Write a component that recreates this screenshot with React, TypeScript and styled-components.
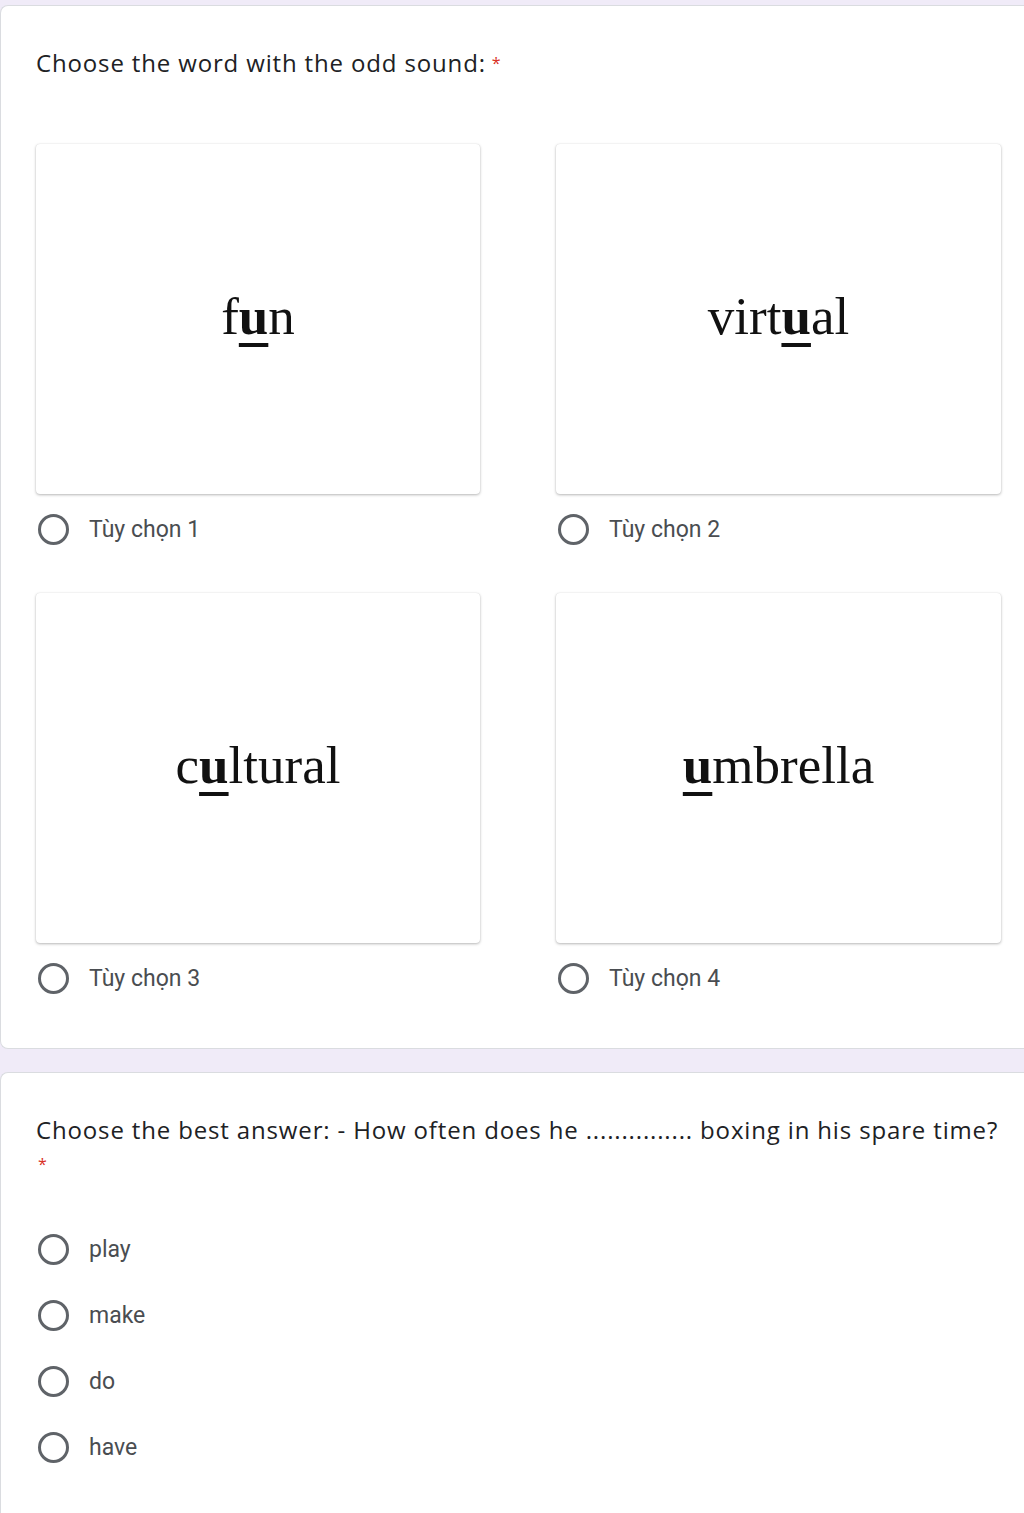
import React, { FunctionComponent } from 'react';
import styled, { createGlobalStyle } from 'styled-components';

const GlobalStyle = createGlobalStyle`
    html, body {
        margin: 0;
        padding: 0;
        background: #f0ebf8;
        overflow-x: hidden;
    }
    body {
        font-family: Roboto, Arial, sans-serif;
    }
`;

const Page = styled.div`
    padding-top: 5px;
    display: flex;
    flex-direction: column;
    gap: 23px;
`;

const Kort = styled.section<{ $top: number; $bottom: number }>`
    background: #fff;
    border: 1px solid #dadce0;
    border-right: none;
    border-radius: 8px 0 0 8px;
    padding: ${(p) => p.$top}px 23px ${(p) => p.$bottom}px 35px;
`;

const Sporsmal = styled.div`
    font-family: 'Open Sans', 'Noto Sans', sans-serif;
    font-size: 24px;
    line-height: 34px;
    color: #202124;
    letter-spacing: 0.85px;
    white-space: nowrap;
`;

const Stjerne = styled.span<{ $block?: boolean }>`
    color: #d93025;
    font-size: 16px;
    margin-left: 6px;
    vertical-align: top;
    ${(p) => (p.$block ? 'display: block; margin-left: 2px; line-height: 34px;' : '')}
`;

const Rutenett = styled.div`
    display: grid;
    grid-template-columns: 444px 445px;
    column-gap: 76px;
    row-gap: 48px;
    margin-top: 64px;
`;

const Alternativ = styled.div`
    display: flex;
    flex-direction: column;
    gap: 19px;
`;

const Bildeboks = styled.div`
    height: 350px;
    background: #fff;
    border-radius: 4px;
    box-shadow: 0 1px 3px rgba(0, 0, 0, 0.28), 0 0 1px rgba(0, 0, 0, 0.12);
    display: flex;
    align-items: center;
    justify-content: center;
    padding-bottom: 6px;
    box-sizing: border-box;
`;

const Ord = styled.span`
    font-family: 'Liberation Serif', 'Times New Roman', serif;
    font-size: 53px;
    color: #111;
    b {
        font-weight: 700;
        text-decoration: underline;
        text-decoration-thickness: 4px;
        text-underline-offset: 9px;
    }
`;

const RadioRad = styled.label`
    display: flex;
    align-items: center;
    gap: 20px;
    height: 32px;
    padding-left: 2px;
`;

const Sirkel = styled.span`
    width: 31px;
    height: 31px;
    box-sizing: border-box;
    border: 3px solid #5f6368;
    border-radius: 50%;
    flex-shrink: 0;
`;

const Etikett = styled.span`
    font-family: Roboto, Arial, sans-serif;
    font-size: 23px;
    color: #4a4d51;
`;

const Liste = styled.div`
    display: flex;
    flex-direction: column;
    gap: 34px;
    margin-top: 52px;
`;

const Radio: FunctionComponent<{ tekst: string }> = (props) => (
    <RadioRad>
        <Sirkel />
        <Etikett>{props.tekst}</Etikett>
    </RadioRad>
);

const ordliste: { foran: string; lyd: string; etter: string }[] = [
    { foran: 'f', lyd: 'u', etter: 'n' },
    { foran: 'virt', lyd: 'u', etter: 'al' },
    { foran: 'c', lyd: 'u', etter: 'ltural' },
    { foran: '', lyd: 'u', etter: 'mbrella' },
];

const svar = ['play', 'make', 'do', 'have'];

const App: FunctionComponent = () => (
    <>
        <GlobalStyle />
        <Page>
            <Kort $top={40} $bottom={54}>
                <Sporsmal>
                    Choose the word with the odd sound:<Stjerne>*</Stjerne>
                </Sporsmal>
                <Rutenett>
                    {ordliste.map((ord, i) => (
                        <Alternativ key={i}>
                            <Bildeboks>
                                <Ord>
                                    {ord.foran}
                                    <b>{ord.lyd}</b>
                                    {ord.etter}
                                </Ord>
                            </Bildeboks>
                            <Radio tekst={`Tùy chọn ${i + 1}`} />
                        </Alternativ>
                    ))}
                </Rutenett>
            </Kort>
            <Kort $top={40} $bottom={80}>
                <Sporsmal>
                    Choose the best answer: - How often does he ............... boxing in his spare time?
                    <Stjerne $block>*</Stjerne>
                </Sporsmal>
                <Liste>
                    {svar.map((s) => (
                        <Radio key={s} tekst={s} />
                    ))}
                </Liste>
            </Kort>
        </Page>
    </>
);

export default App;
